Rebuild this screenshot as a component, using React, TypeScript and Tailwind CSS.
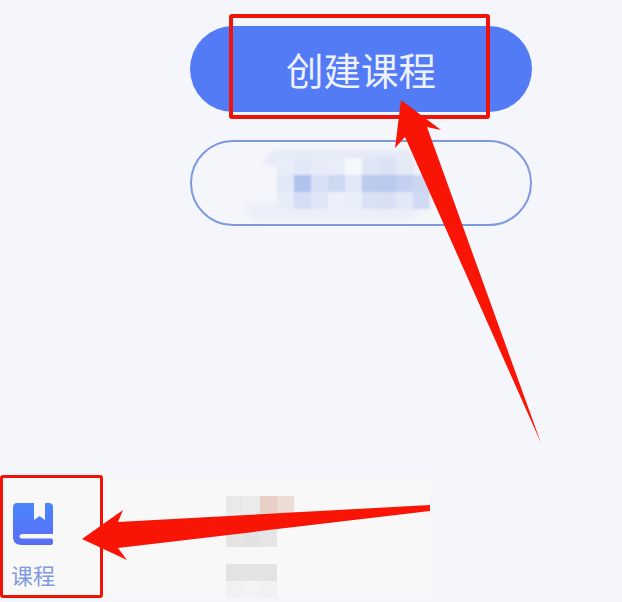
import React from "react";

const outlineMosaic = [
  ["bg-[#e9edf9]", "bg-[#e2e8f7]", "bg-[#e8ecf8]", "bg-[#e9edf8]", "bg-[#f7f8fc]", "bg-[#e0e6f6]", "bg-[#dbe2f4]", "bg-[#e6eaf7]", "bg-[#eff1fa]"],
  ["bg-[#e3e8f7]", "bg-[#b0c3ef]", "bg-[#d9e1f6]", "bg-[#cdd8f3]", "bg-[#e2e8f7]", "bg-[#bccaee]", "bg-[#bac9ed]", "bg-[#c3d0f0]", "bg-[#cbd6f1]"],
  ["bg-[#e8ecf8]", "bg-[#d4ddf4]", "bg-[#e0e6f7]", "bg-[#edf0fa]", "bg-[#eaeef9]", "bg-[#d9e1f4]", "bg-[#d9e0f4]", "bg-[#e3e8f6]", "bg-[#d0dbf3]"],
];

const barMosaic = [
  ["bg-[#e9e9e9]", "bg-[#ebebeb]", "bg-[#e8cfc6]", "bg-[#eddcd5]"],
  ["bg-[#ececec]", "bg-[#ececec]", "bg-[#ededed]", "bg-[#f8f8f8]"],
  ["bg-[#e4e4e4]", "bg-[#e2e2e2]", "bg-[#e6e6e6]", "bg-[#f8f8f8]"],
  ["bg-[#f8f8f8]", "bg-[#f8f8f8]", "bg-[#f8f8f8]", "bg-[#f8f8f8]"],
  ["bg-[#e3e3e3]", "bg-[#e3e3e3]", "bg-[#e3e3e3]", "bg-[#f8f8f8]"],
  ["bg-[#f1f1f1]", "bg-[#f3f3f3]", "bg-[#f1f1f1]", "bg-[#f8f8f8]"],
];

const Mosaic = ({ rows, className }: { rows: string[][]; className: string }) => (
  <div className={className}>
    {rows.map((row, r) => (
      <div key={r} className="flex">
        {row.map((color, c) => (
          <div key={c} className={`w-[17px] h-[17px] ${color}`}></div>
        ))}
      </div>
    ))}
  </div>
);

const BookIcon = () => (
  <svg width="42" height="44" viewBox="0 0 42 44">
    <defs>
      <linearGradient id="book" x1="0" y1="0" x2="0" y2="1">
        <stop offset="0" stopColor="#4a86ff" />
        <stop offset="1" stopColor="#5a6cf2" />
      </linearGradient>
    </defs>
    <path
      d="M5 1H22V18L27.5 14L33 18V1H37C39.5 1 41 2.5 41 5V32H11C8.5 32 7.5 33 7.5 34.5C7.5 36 8.5 36.5 11 36.5H39.5C40.5 36.5 41 37.5 41 39.5C41 41.5 40.5 43 39.5 43H10C4 43 1 40 1 35V5C1 2.5 2.5 1 5 1Z"
      fill="url(#book)"
    />
  </svg>
);

export default function App() {
  return (
    <div className="relative w-[622px] h-[602px] overflow-hidden bg-[#f5f6fb] flex flex-col font-['Noto_Sans_CJK_SC',sans-serif]">
      {/* Buttons */}
      <div className="flex flex-col gap-[28px] pt-[26px] pl-[190px]">
        <button className="w-[342px] h-[86px] rounded-full bg-[#537bf6] text-[#eef2ff] text-[37.5px] font-normal flex items-center justify-center">
          创建课程
        </button>
        <div className="relative w-[342px] h-[86px] rounded-full border-2 border-[#7e99e0] flex items-center pl-[85px]">
          <div className="absolute left-[72px] top-[8px] w-[160px] h-[16px] rounded-t-full bg-[#e6eaf7] blur-[2px]"></div>
          <div className="absolute left-[52px] bottom-[4px] w-[180px] h-[18px] rounded-b-full bg-[#eceff9] blur-[2px]"></div>
          <Mosaic rows={outlineMosaic} className="relative blur-[1px]" />
        </div>
      </div>

      {/* Bottom bar */}
      <div className="mt-auto mb-[4px] w-[430px] h-[121px] bg-[#f8f8f8] flex">
        <div className="w-[66px] pl-[12px] pt-[25px] flex flex-col">
          <BookIcon />
          <span className="mt-[15px] -ml-[1px] text-[22px] leading-[26px] text-[#7f9ae0] whitespace-nowrap">
            课程
          </span>
        </div>
        <Mosaic rows={barMosaic} className="ml-[160px] mt-[19px] blur-[0.5px]" />
      </div>

      {/* Annotations */}
      <div className="absolute left-[229px] top-[14px] w-[261px] h-[105px] border-[4px] border-[#f01408] rounded-[3px]"></div>
      <div className="absolute left-0 top-[475px] w-[103px] h-[123px] border-[3px] border-[#f01408] rounded-[3px]"></div>
      <svg className="absolute inset-0" width="622" height="602" viewBox="0 0 622 602">
        <polygon points="401,100 441,130 427,127 541,443 405,137 395,148" fill="#f91505" />
        <polygon points="82,539 123,510 118,522 430,505 430,511 118,548 127,560" fill="#f91505" />
      </svg>
    </div>
  );
}
